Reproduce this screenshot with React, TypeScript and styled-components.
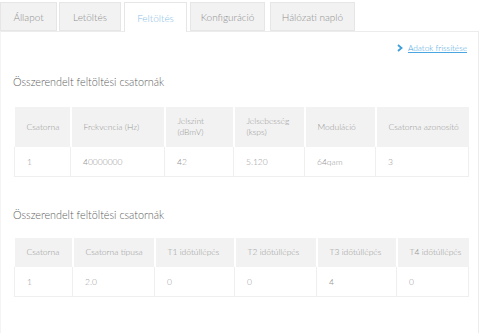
import React from "react";
import styled, { createGlobalStyle } from "styled-components";

const Global = createGlobalStyle`
  html, body { margin: 0; padding: 0; background: #fff; }
  body { font-family: Lato, "Open Sans", "Liberation Sans", sans-serif; font-weight: 300; }
`;

const Page = styled.div`
  width: 480px;
  height: 333px;
  overflow: hidden;
`;

const Tabs = styled.div`
  display: flex;
  gap: 2px;
  padding-top: 2px;
  height: 31px;
  box-sizing: border-box;
  position: relative;
  z-index: 1;
`;

const Tab = styled.div<{ $active?: boolean; $w: number; $ml?: number }>`
  width: ${(p) => p.$w}px;
  margin-left: ${(p) => p.$ml ?? 0}px;
  height: ${(p) => (p.$active ? 30 : 29)}px;
  box-sizing: border-box;
  display: flex;
  align-items: center;
  justify-content: center;
  padding-top: 1px;
  font-size: 10px;
  color: ${(p) => (p.$active ? "#8cc1e6" : "#8f8f8f")};
  background: ${(p) => (p.$active ? "#fff" : "#f2f2f2")};
  border: 1px solid #e6e6e6;
  border-bottom: ${(p) => (p.$active ? "none" : "1px solid #e6e6e6")};
`;

const Panel = styled.div`
  width: 479px;
  height: 320px;
  box-sizing: border-box;
  border: 1px solid #ececec;
  border-left-color: #f4f4f4;
  padding: 0 11px 0 12px;
`;

const LinkRow = styled.div`
  display: flex;
  justify-content: flex-end;
  align-items: center;
  gap: 5px;
  padding: 10px 0 0;
  height: 22px;
  box-sizing: border-box;
`;

const Link = styled.a`
  font-size: 8.3px;
  color: #4aa6e0;
  text-decoration: underline;
`;

const Heading = styled.h2<{ $mt: number }>`
  margin: ${(p) => p.$mt}px 0 0 0;
  font-size: 10.8px;
  font-weight: 300;
  color: #5e5e5e;
  line-height: 16px;
`;

const Table = styled.table<{ $mt: number }>`
  margin-top: ${(p) => p.$mt}px;
  border-collapse: collapse;
  table-layout: fixed;
  width: 454px;
  margin-left: 1px;
`;

const Th = styled.th<{ $h: number }>`
  background: #f2f2f2;
  height: ${(p) => p.$h}px;
  padding: 0 4px 0 12px;
  text-align: left;
  font-weight: 300;
  font-size: 8.5px;
  line-height: 11px;
  color: #979797;
  border-left: 2px solid #fff;
  &:first-child { border-left: none; }
`;

const Td = styled.td`
  height: 29px;
  padding: 0 4px 0 12px;
  font-size: 8.5px;
  color: #979797;
  border: 1px solid #efefef;
  border-top: none;
`;

const Chevron = () => (
  <svg width="6" height="8" viewBox="0 0 6 8">
    <path d="M1 1 L4.5 4 L1 7" fill="none" stroke="#3e9fdc" strokeWidth="1.8" />
  </svg>
);

const t1Cols = [56, 94, 69, 71, 71, 93];
const t1Head = ["Csatorna", "Frekvencia (Hz)", "Jelszint (dBmV)", "Jelsebesség (ksps)", "Moduláció", "Csatorna azonosító"];
const t1Row = ["1", "40000000", "42", "5.120", "64qam", "3"];

const t2Cols = [58, 82, 80, 82, 80, 72];
const t2Head = ["Csatorna", "Csatorna típusa", "T1 időtúllépés", "T2 időtúllépés", "T3 időtúllépés", "T4 időtúllépés"];
const t2Row = ["1", "2.0", "0", "0", "4", "0"];

export default function App() {
  return (
    <Page>
      <Global />
      <Tabs>
        <Tab $w={57}>Állapot</Tab>
        <Tab $w={62}>Letöltés</Tab>
        <Tab $w={63} $active $ml={1}>Feltöltés</Tab>
        <Tab $w={75} $ml={1}>Konfiguráció</Tab>
        <Tab $w={85} $ml={3}>Hálózati napló</Tab>
      </Tabs>
      <Panel>
        <LinkRow>
          <Chevron />
          <Link>Adatok frissítése</Link>
        </LinkRow>
        <Heading $mt={20}>Összerendelt feltöltési csatornák</Heading>
        <Table $mt={17}>
          <colgroup>
            {t1Cols.map((w, i) => <col key={i} style={{ width: w }} />)}
          </colgroup>
          <thead>
            <tr>
              {t1Head.map((h, i) => (
                <Th key={h} $h={40}>
                  {i === 2 ? <>Jelszint<br />(dBmV)</> : i === 3 ? <>Jelsebesség<br />(ksps)</> : h}
                </Th>
              ))}
            </tr>
          </thead>
          <tbody>
            <tr>{t1Row.map((c, i) => <Td key={i}>{c}</Td>)}</tr>
          </tbody>
        </Table>
        <Heading $mt={30}>Összerendelt feltöltési csatornák</Heading>
        <Table $mt={15}>
          <colgroup>
            {t2Cols.map((w, i) => <col key={i} style={{ width: w }} />)}
          </colgroup>
          <thead>
            <tr>{t2Head.map((h) => <Th key={h} $h={29}>{h}</Th>)}</tr>
          </thead>
          <tbody>
            <tr>{t2Row.map((c, i) => <Td key={i}>{c}</Td>)}</tr>
          </tbody>
        </Table>
      </Panel>
    </Page>
  );
}
